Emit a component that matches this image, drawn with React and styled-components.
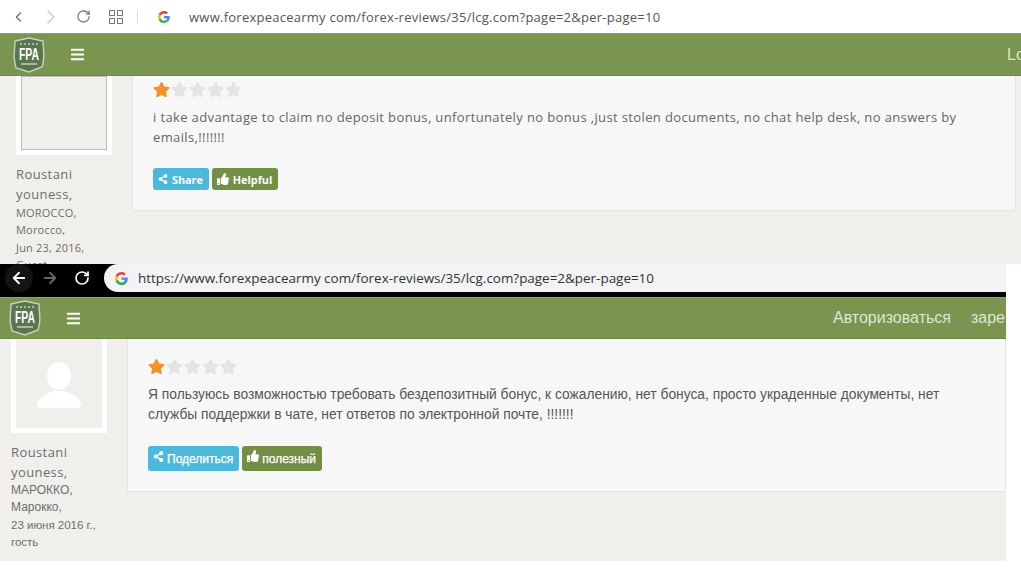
import React from "react";
import styled, { createGlobalStyle } from "styled-components";
import { ChevronLeft, ChevronRight, RotateCw, ArrowLeft, ArrowRight } from "lucide-react";
import { FaBars, FaShareAlt, FaStar, FaThumbsUp } from "react-icons/fa";

const Global = createGlobalStyle`
  html, body { margin: 0; padding: 0; background: #fff; }
  body { width: 1021px; height: 569px; overflow: hidden; font-family: "Open Sans", "Liberation Sans", sans-serif; }
`;

const Shot = styled.section`
  width: ${(p) => p.$width}px;
  height: ${(p) => p.$height}px;
  overflow: hidden;
  display: flex;
  flex-direction: column;
  background: #f1efec;
`;

const LightChrome = styled.div`
  height: 33px;
  flex: none;
  background: #fff;
  display: flex;
  align-items: center;
  padding-left: 10px;
  color: #666;
`;
const DarkChrome = styled.div`
  height: 28px;
  flex: none;
  background: #000;
  display: flex;
  align-items: center;
  color: #fff;
  border-bottom: 5px solid #000;
  box-sizing: content-box;
`;
const NavSlot = styled.span`
  display: flex;
  align-items: center;
  justify-content: center;
  flex: none;
  width: ${(p) => p.$w}px;
  margin-left: ${(p) => p.$ml || 0}px;
  color: ${(p) => p.$color || "inherit"};
`;
const BackCircle = styled.span`
  width: 28px;
  height: 28px;
  border-radius: 50%;
  background: #141414;
  display: flex;
  align-items: center;
  justify-content: center;
`;
const Tabs = styled.span`
  display: grid;
  grid-template-columns: 6px 6px;
  gap: 2px;
  flex: none;
  & > i { display: block; width: 4px; height: 4px; border: 1px solid #777; }
`;
const Divider = styled.span`
  width: 1px;
  height: 14px;
  background: #ddd;
  margin: 0 20px 0 12px;
  flex: none;
`;
const LightUrl = styled.span`
  font-size: 13px;
  letter-spacing: 0.25px;
  color: #555;
  margin-left: 19px;
  white-space: nowrap;
`;
const Pill = styled.div`
  flex: 1;
  height: 28px;
  margin-left: 3px;
  background: #f1f3f4;
  border-radius: 14px 0 0 14px;
  display: flex;
  align-items: center;
  padding-left: 11px;
  gap: 10px;
  color: #333;
  font-size: 13.45px;
  white-space: nowrap;
`;

const GreenBar = styled.header`
  height: ${(p) => p.$h}px;
  flex: none;
  background: #799550;
  border-top: 1px solid #8ea56e;
  border-bottom: 1px solid #6d8846;
  box-sizing: border-box;
  display: flex;
  align-items: center;
  color: #fff;
  padding-left: ${(p) => p.$pad}px;
  white-space: nowrap;
  overflow: hidden;
`;
const Burger = styled(FaBars)`
  margin-left: 24px;
  flex: none;
  color: #fff;
`;
const NavLinks = styled.nav`
  margin-left: auto;
  display: flex;
  gap: 20px;
  font-family: "Liberation Sans", sans-serif;
  font-size: 16px;
  color: #dfe6d4;
  flex: none;
  width: ${(p) => p.$w}px;
`;

const Body = styled.div`
  flex: 1;
  display: flex;
  align-items: flex-start;
  padding-left: ${(p) => p.$pad}px;
  min-height: 0;
`;
const Side = styled.aside`
  width: 96px;
  margin-right: 20px;
  flex: none;
  color: #6d6d6d;
`;
const AvatarFrame = styled.div`
  height: ${(p) => p.$h}px;
  background: ${(p) => p.$fill};
  border: 5px solid #fff;
  border-top: 0;
  box-sizing: border-box;
  display: flex;
  align-items: flex-end;
  justify-content: center;
  overflow: hidden;
  box-shadow: ${(p) => (p.$inset ? "inset 0 0 0 1px #bdbdb5" : "none")};
  & > svg { margin-bottom: 20px; }
`;
const Name = styled.div`
  font-size: 13px;
  line-height: 20px;
  letter-spacing: 0.4px;
  margin-top: ${(p) => p.$top}px;
`;
const Meta = styled.div`
  font-family: ${(p) => (p.$ru ? '"Liberation Sans", sans-serif' : 'inherit')};
  font-size: ${(p) => p.$size || 11}px;
  line-height: 17.3px;
  letter-spacing: ${(p) => (p.$ru ? 0 : 0.2)}px;
  white-space: nowrap;
`;

const Panel = styled.article`
  flex: none;
  width: ${(p) => p.$w}px;
  height: ${(p) => p.$h}px;
  box-sizing: border-box;
  background: #f7f7f7;
  border: 1px solid #e4e4e2;
  border-top: 0;
  padding: ${(p) => p.$top}px 20px 0;
`;
const Stars = styled.div`
  display: flex;
  gap: 1px;
  height: 18px;
  align-items: center;
`;
const Text = styled.p`
  margin: ${(p) => p.$top}px 0 0;
  font-family: ${(p) => (p.$ru ? '"Liberation Sans", sans-serif' : 'inherit')};
  font-size: ${(p) => (p.$ru ? 13.8 : 13)}px;
  line-height: 20px;
  letter-spacing: ${(p) => (p.$ru ? 0 : 0.37)}px;
  color: ${(p) => (p.$ru ? "#555" : "#666")};
  width: ${(p) => p.$w}px;
`;
const Buttons = styled.div`
  display: flex;
  gap: 3px;
  margin-top: ${(p) => p.$top}px;
`;
const Btn = styled.span`
  height: ${(p) => p.$h}px;
  background: ${(p) => (p.$kind === "share" ? "#4cb9dc" : "#728f45")};
  border-radius: 3px;
  color: #fff;
  font-family: ${(p) => (p.$ru ? '"Liberation Sans", sans-serif' : 'inherit')};
  font-size: ${(p) => (p.$ru ? 12 : 10.8)}px;
  font-weight: ${(p) => (p.$ru ? 400 : 700)};
  -webkit-text-stroke: ${(p) => (p.$ru ? "0.25px #fff" : "0")};
  display: flex;
  align-items: center;
  gap: ${(p) => (p.$ru ? 3 : 4)}px;
  padding: 0 6px 0 5px;
  white-space: nowrap;
  & > svg { flex: none; margin-bottom: ${(p) => (p.$ru ? 5 : 0)}px; }
`;

const GoogleG = ({ size }) => (
  <svg width={size} height={size} viewBox="0 0 48 48" style={{ flex: "none" }}>
    <path fill="#EA4335" d="M24 9.5c3.5 0 6.7 1.2 9.2 3.6l6.9-6.9C35.9 2.4 30.5 0 24 0 14.6 0 6.5 5.4 2.6 13.2l8 6.2C12.5 13.7 17.8 9.5 24 9.5z" />
    <path fill="#4285F4" d="M46.9 24.5c0-1.6-.1-3.1-.4-4.5H24v9h12.9c-.6 3-2.2 5.5-4.7 7.2l7.7 6c4.5-4.2 7-10.3 7-17.7z" />
    <path fill="#FBBC05" d="M10.5 28.6c-.5-1.4-.8-3-.8-4.6s.3-3.2.8-4.6l-8-6.2C.9 16.5 0 20.1 0 24s.9 7.5 2.6 10.8l7.9-6.2z" />
    <path fill="#34A853" d="M24 48c6.5 0 11.9-2.1 15.9-5.8l-7.7-6c-2.1 1.4-4.9 2.3-8.2 2.3-6.200 0-11.500-4.200-13.400-9.900l-8 6.200C6.500 42.600 14.600 48 24 48z" />
  </svg>
);

const Logo = () => (
  <svg width="34" height="36" viewBox="0 0 34 36" style={{ flex: "none" }}>
    <path d="M3 4 L17 1 L31 4 C31 12 33 18 31 26 L30 30 L17 35 L4 31 L3 26 C1 18 3 12 3 4 Z" fill="#5a7550" stroke="#c9d3bd" strokeWidth="1.4" />
    <g fill="#c8d2bb">
      {[9, 13, 17, 21, 25].map((x) => <circle key={x} cx={x} cy="7" r="1" />)}
    </g>
    <text transform="translate(17 23) scale(1 1.3)" textAnchor="middle" fontFamily="Liberation Sans, sans-serif" fontWeight="700" fontSize="12" textLength="20" lengthAdjust="spacingAndGlyphs" fill="#fff">FPA</text>
    <rect x="9" y="26" width="16" height="2" fill="#a9b89a" />
  </svg>
);

const Silhouette = () => (
  <svg width="46" height="52" viewBox="0 0 46 52">
    <ellipse cx="23" cy="20" rx="12" ry="14" fill="#fff" />
    <path d="M1 48 C1 41 12 37 18 35 H28 C34 37 45 41 45 48 Q45 52 41 52 H5 Q1 52 1 48 Z" fill="#fff" />
  </svg>
);

const Rating = ({ size }) => (
  <Stars>
    <FaStar size={size} color="#f5902a" />
    {[0, 1, 2, 3].map((i) => <FaStar key={i} size={size} color="#e4e4e4" />)}
  </Stars>
);

export default function App() {
  return (
    <>
      <Global />
      <Shot $width={1021} $height={264}>
        <LightChrome>
          <NavSlot $w={17}><ChevronLeft size={24} strokeWidth={1.5} /></NavSlot>
          <NavSlot $w={48} $color="#ccc"><ChevronRight size={24} strokeWidth={1.5} /></NavSlot>
          <NavSlot $w={16}><RotateCw size={15} strokeWidth={1.7} /></NavSlot>
          <NavSlot $w={18} $ml={16}><Tabs><i /><i /><i /><i /></Tabs></NavSlot>
          <Divider />
          <GoogleG size={12} />
          <LightUrl>www.forexpeacearmy com/forex-reviews/35/lcg.com?page=2&amp;per-page=10</LightUrl>
        </LightChrome>
        <GreenBar $h={43} $pad={12}>
          <Logo />
          <Burger size={15} />
          <NavLinks $w={14}>Lo</NavLinks>
        </GreenBar>
        <Body $pad={16}>
          <Side>
            <AvatarFrame $h={79} $fill="#f1efec" $inset />
            <Name $top={9}>Roustani youness,</Name>
            <Meta>MOROCCO,</Meta>
            <Meta>Morocco,</Meta>
            <Meta>Jun 23, 2016,</Meta>
            <Meta>Guest</Meta>
          </Side>
          <Panel $w={884} $h={135} $top={4}>
            <Rating size={17} />
            <Text $top={9} $w={830}>i take advantage to claim no deposit bonus, unfortunately no bonus ,just stolen documents, no chat help desk, no answers by emails,!!!!!!!</Text>
            <Buttons $top={21}>
              <Btn $kind="share" $h={22}><FaShareAlt size={10} />Share</Btn>
              <Btn $kind="helpful" $h={22}><FaThumbsUp size={12} />Helpful</Btn>
            </Buttons>
          </Panel>
        </Body>
      </Shot>
      <Shot $width={1006} $height={297}>
        <DarkChrome>
          <NavSlot $w={37}><BackCircle><ArrowLeft size={18} strokeWidth={2.4} /></BackCircle></NavSlot>
          <NavSlot $w={26} $color="#666"><ArrowRight size={18} strokeWidth={2.4} /></NavSlot>
          <NavSlot $w={38}><RotateCw size={16} strokeWidth={2.6} /></NavSlot>
          <Pill>
            <GoogleG size={13} />
            https://www.forexpeacearmy com/forex-reviews/35/lcg.com?page=2&amp;per-page=10
          </Pill>
        </DarkChrome>
        <GreenBar $h={42} $pad={8}>
          <Logo />
          <Burger size={15} />
          <NavLinks $w={173}><span>Авторизоваться</span><span>заре</span></NavLinks>
        </GreenBar>
        <Body $pad={11}>
          <Side>
            <AvatarFrame $h={94} $fill="#f1efec"><Silhouette /></AvatarFrame>
            <Name $top={9}>Roustani youness,</Name>
            <Meta $ru $size={12}>МАРОККО,</Meta>
            <Meta $ru $size={12}>Марокко,</Meta>
            <Meta $ru $size={11.5}>23 июня 2016 г.,</Meta>
            <Meta $ru $size={11.5}>гость</Meta>
          </Side>
          <Panel $w={879} $h={153} $top={18}>
            <Rating size={17} />
            <Text $ru $top={10} $w={810}>Я пользуюсь возможностью требовать бездепозитный бонус, к сожалению, нет бонуса, просто украденные документы, нет службы поддержки в чате, нет ответов по электронной почте, !!!!!!!</Text>
            <Buttons $top={21}>
              <Btn $ru $kind="share" $h={25}><FaShareAlt size={11} />Поделиться</Btn>
              <Btn $ru $kind="helpful" $h={25}><FaThumbsUp size={12} />полезный</Btn>
            </Buttons>
          </Panel>
        </Body>
      </Shot>
    </>
  );
}
